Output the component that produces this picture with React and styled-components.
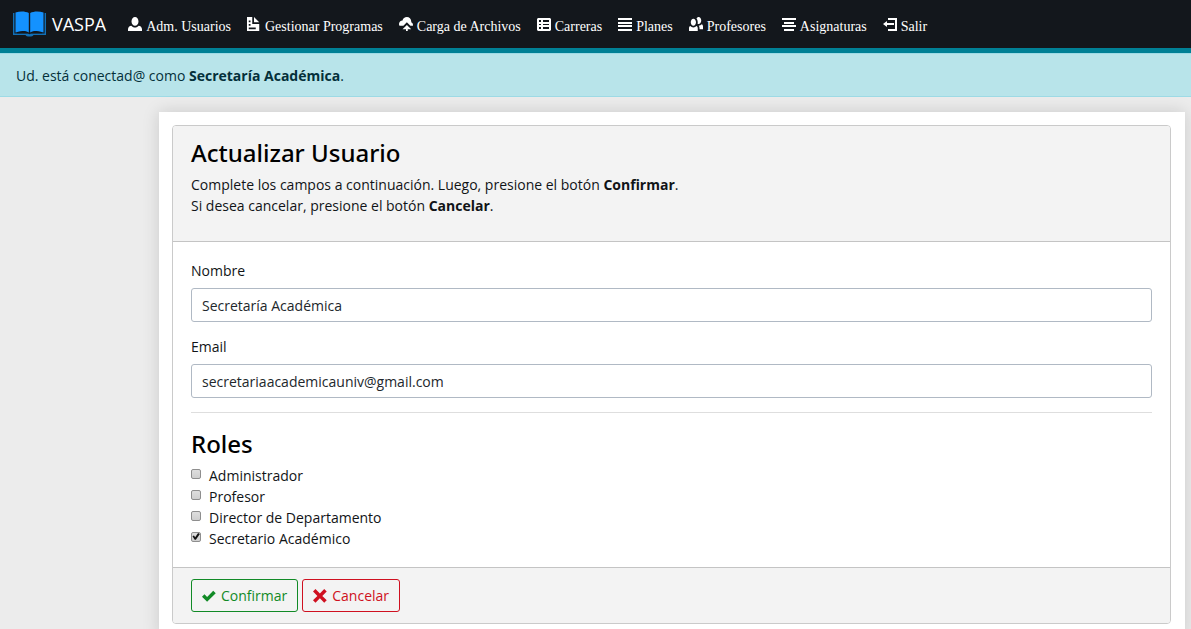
import React from "react";
import styled, { createGlobalStyle } from "styled-components";

const GlobalStyle = createGlobalStyle`
  *, *::before, *::after { box-sizing: border-box; }
  body {
    margin: 0;
    background: #ececec;
    color: #111417;
    font: 400 14px/21px "Open Sans", "Noto Sans", sans-serif;
  }
`;

const Navbar = styled.nav`
  display: flex;
  align-items: center;
  min-height: 53px;
  padding: 0 13px;
  background: #13171c;
  border-bottom: 5px solid #008095;
`;

const Brand = styled.a`
  display: flex;
  align-items: center;
  gap: 6px;
  margin-right: 14px;
  color: #fff;
  font-size: 18px;
  line-height: 26px;
  text-decoration: none;
`;

const NavList = styled.ul`
  display: flex;
  margin: 0;
  padding: 4px 0 0;
  list-style: none;
`;

const NavLink = styled.a`
  display: flex;
  align-items: center;
  gap: 4px;
  padding: 0 8px;
  color: #fff;
  font: 14px/21px "Liberation Serif", serif;
  text-decoration: none;
  white-space: nowrap;

  svg { margin-bottom: 4px; }
`;

const Icon = styled.svg`
  flex: none;
  width: 14px;
  height: 14px;
  fill: currentColor;
`;

const Alert = styled.div`
  padding: 11px 16px 10px;
  border: solid #9edbe6;
  border-width: 1px 0;
  background: #b8e4ea;
  color: #04303a;
`;

const Main = styled.main`
  margin: 15px 6px 0 159px;
  padding: 13px 14px 13px 13px;
  background: #fff;
  box-shadow: 0 0 16px rgba(0, 0, 0, 0.15);
`;

const Card = styled.form`
  border: 1px solid #cacaca;
  border-radius: 4px;
  overflow: hidden;
`;

const CardHeader = styled.header`
  padding: 12px 18px 25px;
  background: #f3f3f3;
  border-bottom: 1px solid #c4c4c4;
`;

const CardBody = styled.div`
  padding: 18px;
`;

const CardFooter = styled.footer`
  display: flex;
  gap: 4px;
  padding: 11px 18px;
  background: #f3f3f3;
  border-top: 1px solid #c4c4c4;
`;

const Title = styled.h2`
  margin: 0 0 7px;
  color: #000;
  font-family: "Noto Sans", sans-serif;
  font-size: 24px;
  font-weight: 500;
  line-height: 29px;
`;

const Text = styled.p`
  margin: 0;
`;

const Field = styled.div`
  display: flex;
  flex-direction: column;
  gap: 7px;
  margin-bottom: 14px;
`;

const Input = styled.input`
  width: 100%;
  height: 34px;
  padding: 1px 10px;
  border: 1px solid #b0b9c4;
  border-radius: 3px;
  background: #fff;
  color: #22272c;
  font: inherit;
`;

const Divider = styled.hr`
  margin: 0 0 16px;
  border: 0;
  border-top: 1px solid #dedede;
`;

const Role = styled.label`
  display: flex;
  align-items: center;
  gap: 8px;
`;

const Checkbox = styled.input`
  appearance: none;
  flex: none;
  width: 10px;
  height: 10px;
  margin: 0 0 4px;
  border: 1px solid #8e8e8e;
  border-radius: 2px;
  background: linear-gradient(#dedede, #cfcfcf);

  &:checked::after {
    content: "";
    display: block;
    width: 8px;
    height: 8px;
    background: #111;
    clip-path: polygon(6% 48%, 24% 38%, 40% 58%, 76% 6%, 98% 18%, 48% 92%, 34% 92%);
  }
`;

const Button = styled.button`
  display: flex;
  align-items: center;
  gap: 5px;
  height: 33px;
  padding: 0 10px;
  border: 1px solid currentColor;
  border-radius: 3px;
  background: transparent;
  color: ${(p) => p.$color};
  font: inherit;
`;

const icons = {
  person:
    "M4 0c-1.1 0-2 1.12-2 2.5s.9 2.5 2 2.5 2-1.12 2-2.5-.9-2.5-2-2.5zm-2.09 5c-1.06.05-1.91.92-1.91 2v1h8v-1c0-1.08-.84-1.95-1.91-2-.54.61-1.28 1-2.09 1-.81 0-1.55-.39-2.09-1z",
  document:
    "M0 0v8h7v-4h-4v-4h-3zm4 0v3h3l-3-3zm-3 2h1v1h-1v-1zm0 2h1v1h-1v-1zm0 2h4v1h-4v-1z",
  upload:
    "M4.5 0c-1.21 0-2.27.86-2.5 2-1.1 0-2 .9-2 2 0 .37.11.71.28 1h2.22l2-2 2 2h1.41c.06-.16.09-.32.09-.5 0-.65-.42-1.29-1-1.5v-.5c0-1.38-1.12-2.5-2.5-2.5zm0 4.5l-2.5 2.5h2v1h1v-1h2l-2.5-2.5z",
  people:
    "M5.5 0c-.51 0-.95.35-1.22.88.45.54.72 1.28.72 2.13 0 .29-.03.55-.09.81.19.11.38.19.59.19.83 0 1.5-.9 1.5-2s-.67-2-1.5-2zm-3 1c-.83 0-1.5.9-1.5 2s.67 2 1.5 2 1.5-.9 1.5-2-.67-2-1.5-2zm4.75 3.16c-.43.51-1.02.82-1.69.84.27.38.44.84.44 1.34v.66h2v-1.66c0-.52-.31-.97-.75-1.19zm-6.5 1c-.44.22-.75.67-.75 1.19v1.66h5v-1.66c0-.52-.31-.97-.75-1.19-.45.53-1.06.84-1.75.84s-1.3-.32-1.75-.84z",
  check:
    "M6.41 1l-.69.72-2.78 2.78-.81-.78-.72-.72-1.41 1.41.72.72 1.5 1.5.69.72.72-.72 3.5-3.5.72-.72-1.44-1.41z",
  cross:
    "M1.41 0l-1.41 1.41.72.72 1.78 1.81-1.78 1.78-.72.69 1.41 1.44.72-.72 1.81-1.81 1.78 1.81.69.72 1.44-1.44-.72-.69-1.81-1.78 1.81-1.81.72-.72-1.44-1.41-.69.72-1.78 1.78-1.81-1.78-.72-.72z",
};

const pixelIcons = {
  sheet:
    "M1 1h12l1 1v11l-1 1H1l-1-1V2zM2 3v2h2V3zM6 3v2h6V3zM2 7v1h2V7zM6 7v1h6V7zM2 10v2h2v-2zM6 10v2h6v-2z",
  justify: "M0 1h14v2H0zM0 5h14v2H0zM0 8h14v2H0zM0 12h14v2H0z",
  center: "M0 1h14v2H0zM2 5h10v2H2zM0 8h14v2H0zM2 12h10v2H2z",
  logout: "M5 1h9v13H5v-2h7V3H5zM4 4v2h7v2H4v2L0 7z",
};

const Glyph = ({ name }) => (
  <Icon viewBox={pixelIcons[name] ? "0 0 14 14" : "0 0 8 8"} aria-hidden="true">
    <path fillRule="evenodd" d={pixelIcons[name] || icons[name]} />
  </Icon>
);

const BookLogo = () => (
  <svg width="33" height="26" viewBox="0 0 33 26" aria-hidden="true">
    <path fill="#1170b8" d="M0 2h1.4v20.5H15l1.5.7 1.5-.7h13.600V2H33v22H20.500c-.6 1.300-1.800 1.600-4 1.600s-3.400-.3-4-1.600H0z" />
    <path fill="#1492ff" d="M2.500 1.500C7 0 12.500.2 15.800 2v19.500C12 19.400 7 19.700 2.500 21.500zM17.200 2C20.500.2 26 0 30.500 1.500v20c-4.500-1.800-9.500-2.100-13.300 0z" />
    <path fill="#13171c" d="M4 22c4.500-2 9-1.900 11.800.3H4zM29 22c-4.500-2-9-1.900-11.800.3H29z" />
  </svg>
);

const links = [
  ["person", "Adm. Usuarios"],
  ["document", "Gestionar Programas"],
  ["upload", "Carga de Archivos"],
  ["sheet", "Carreras"],
  ["justify", "Planes"],
  ["people", "Profesores"],
  ["center", "Asignaturas"],
  ["logout", "Salir"],
];

const roles = [
  ["Administrador", false],
  ["Profesor", false],
  ["Director de Departamento", false],
  ["Secretario Académico", true],
];

export default function App() {
  return (
    <>
      <GlobalStyle />
      <Navbar>
        <Brand href="#">
          <BookLogo />
          VASPA
        </Brand>
        <NavList>
          {links.map(([icon, label]) => (
            <li key={label}>
              <NavLink href="#">
                <Glyph name={icon} />
                {label}
              </NavLink>
            </li>
          ))}
        </NavList>
      </Navbar>
      <Alert role="status">
        Ud. está conectad@ como <strong>Secretaría Académica</strong>.
      </Alert>
      <Main>
        <Card onSubmit={(e) => e.preventDefault()}>
          <CardHeader>
            <Title>Actualizar Usuario</Title>
            <Text>
              Complete los campos a continuación. Luego, presione el botón <strong>Confirmar</strong>.
              <br />
              Si desea cancelar, presione el botón <strong>Cancelar</strong>.
            </Text>
          </CardHeader>
          <CardBody>
            <Field>
              <label htmlFor="nombre">Nombre</label>
              <Input id="nombre" type="text" defaultValue="Secretaría Académica" />
            </Field>
            <Field>
              <label htmlFor="email">Email</label>
              <Input id="email" type="email" defaultValue="secretariaacademicauniv@gmail.com" />
            </Field>
            <Divider />
            <Title>Roles</Title>
            {roles.map(([label, checked]) => (
              <Role key={label}>
                <Checkbox type="checkbox" defaultChecked={checked} />
                {label}
              </Role>
            ))}
          </CardBody>
          <CardFooter>
            <Button type="submit" $color="#118a26">
              <Glyph name="check" />
              Confirmar
            </Button>
            <Button type="button" $color="#cf1020">
              <Glyph name="cross" />
              Cancelar
            </Button>
          </CardFooter>
        </Card>
      </Main>
    </>
  );
}
